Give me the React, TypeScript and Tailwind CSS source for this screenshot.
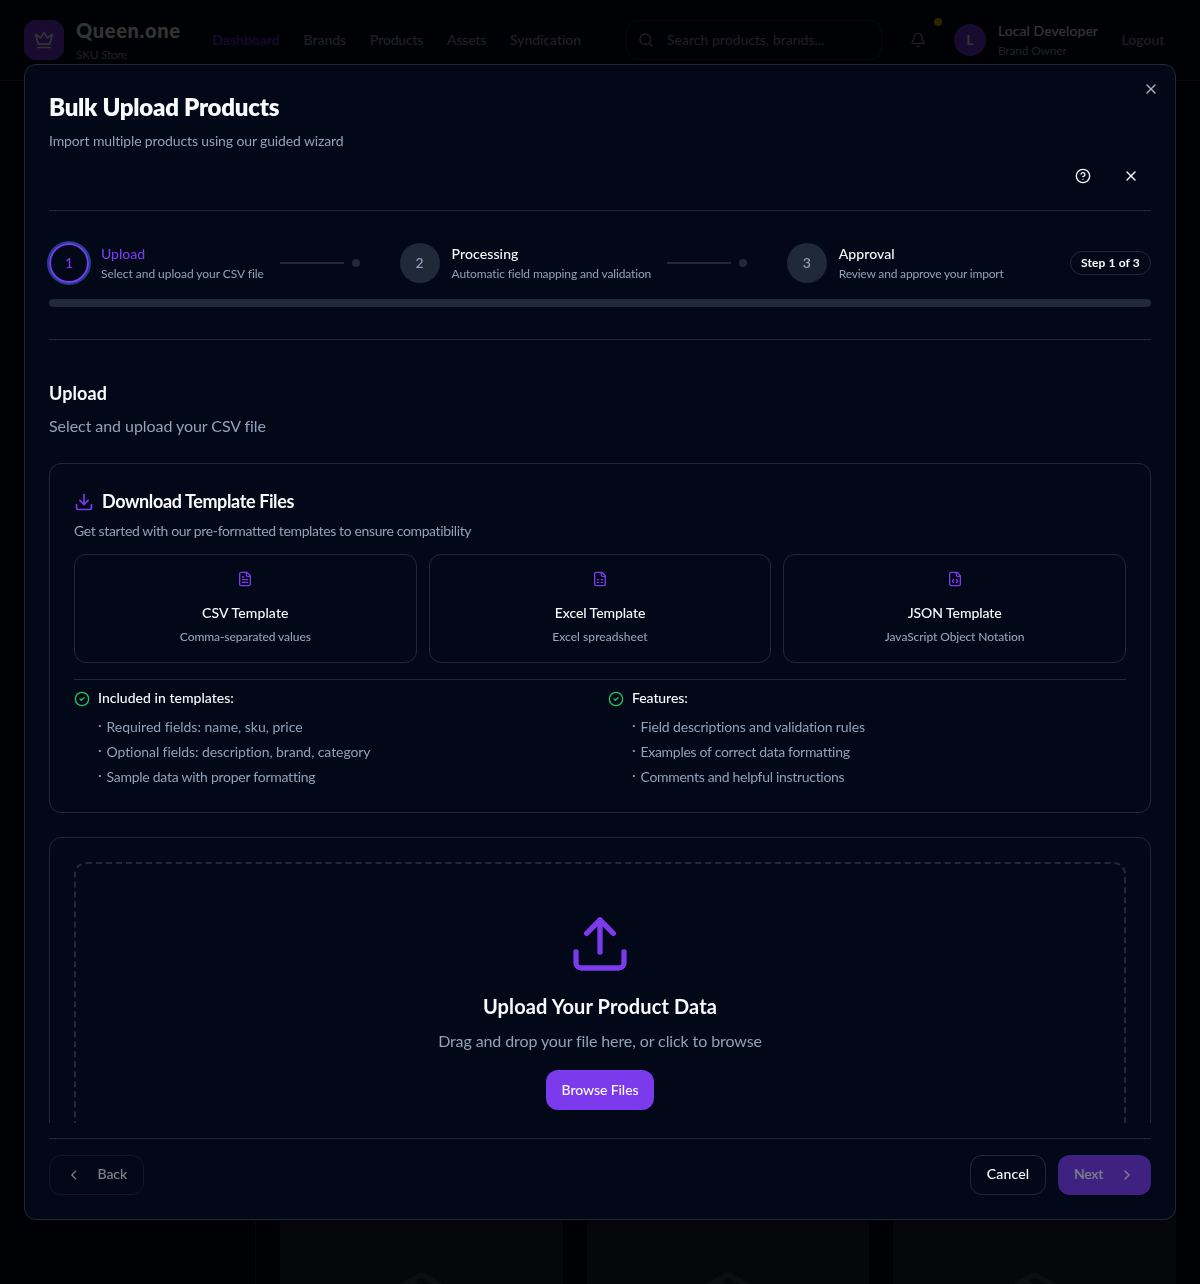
import type { ReactNode } from "react";
import { Bell, ChevronLeft, ChevronRight, CircleCheck, CircleQuestionMark, Crown, Download, Package, Search, Upload, X } from "lucide-react";

function FileIcon({ children }: { children: ReactNode }) {
  return (
    <svg viewBox="0 0 24 24" fill="none" stroke="currentColor" strokeWidth="2" strokeLinecap="round" strokeLinejoin="round" className="size-4 text-[#7c3aed]">
      <path d="M15 2H6a2 2 0 0 0-2 2v16a2 2 0 0 0 2 2h12a2 2 0 0 0 2-2V7Z" />
      <path d="M14 2v4a2 2 0 0 0 2 2h4" />
      {children}
    </svg>
  );
}

const navItems = [
  { label: "Dashboard", style: "w-[67px] text-[#7c3aed] tracking-[0.02px]" },
  { label: "Brands", style: "w-[42.6px] text-slate-400 tracking-[-0.02px]" },
  { label: "Products", style: "w-[53px] text-slate-400 tracking-[-0.21px]" },
  { label: "Assets", style: "w-[39px] text-slate-400 tracking-[-0.2px]" },
  { label: "Syndication", style: "w-[71px] text-slate-400 tracking-[-0.06px]" },
];

function Header() {
  return (
    <header className="flex h-[81px] items-start border-b border-[#1f2937] px-6 pt-5">
      <div className="flex size-10 items-center justify-center rounded-xl bg-[#7c3aed]">
        <Crown className="size-5 text-white" />
      </div>
      <div className="ml-3 w-[136.5px]">
        <div className="-mt-1 h-7 text-xl leading-7 font-black tracking-[0.68px] text-white">Queen.one</div>
        <div className="mt-[3px] text-xs leading-4 tracking-[-0.34px] text-slate-400">SKU Store</div>
      </div>
      <nav className="flex h-10 items-center gap-6 text-sm font-medium whitespace-nowrap">
        {navItems.map((n) => (
          <a key={n.label} className={n.style}>{n.label}</a>
        ))}
      </nav>
      <div className="ml-auto flex h-10 w-64 items-center rounded-xl border border-[#1f2937] px-[11px]">
        <Search className="size-4 text-slate-400" />
        <span className="ml-[13px] text-sm tracking-[0.02px] text-slate-400">Search products, brands...</span>
      </div>
      <div className="relative ml-4 flex size-10 items-center justify-center">
        <Bell className="size-4 text-slate-400" />
        <span className="absolute -top-0.5 -right-1 size-2 rounded-full bg-yellow-500" />
      </div>
      <div className="mt-1 ml-4 flex size-8 items-center justify-center rounded-full bg-[#7c3aed] text-sm font-bold text-white">L</div>
      <div className="ml-3 w-[123.5px] pt-px whitespace-nowrap">
        <div className="text-sm leading-5 font-medium tracking-[0.05px] text-white">Local Developer</div>
        <div className="mt-[2px] text-xs leading-4 tracking-[-0.2px] text-slate-400">Brand Owner</div>
      </div>
      <span className="w-[54.5px] text-sm leading-10 font-medium tracking-[0.04px] text-slate-400">Logout</span>
    </header>
  );
}

function PageBehind() {
  return (
    <div className="flex h-[1284px] flex-col">
      <Header />
      <div className="flex flex-1">
        <aside className="w-64 border-r border-[#1f2937]" />
        <main className="grid flex-1 grid-cols-3 items-end gap-6 px-6">
          {[0, 1, 2].map((i) => (
            <div key={i} className="flex h-[260px] justify-center overflow-hidden bg-[#1f242b]">
              <Package className="mt-[246px] size-16 shrink-0 text-[#41464f]" />
            </div>
          ))}
        </main>
      </div>
    </div>
  );
}

function Connector() {
  return (
    <div className="mr-[39.6px] ml-4 flex items-center gap-2">
      <div className="h-0.5 w-16 bg-[#1f2937]" />
      <div className="size-2 rounded-full bg-[#1f2937]" />
    </div>
  );
}

function Step({ n, title, text, active = false, textStyle, titleStyle }: { n: number; title: string; text: string; active?: boolean; textStyle: string; titleStyle: string }) {
  return (
    <div className="flex items-center gap-3">
      <div
        className={
          active
            ? "flex size-10 items-center justify-center rounded-full border-2 border-[#7c3aed] text-sm font-medium text-[#7c3aed] ring-2 ring-blue-500/50"
            : "flex size-10 items-center justify-center rounded-full bg-[#1f2937] text-sm font-medium text-slate-400"
        }
      >
        {n}
      </div>
      <div className="whitespace-nowrap">
        <div className={`text-sm leading-5 font-medium ${titleStyle}`}>{title}</div>
        <div className={`mt-0.5 text-xs leading-4 text-slate-400 ${textStyle}`}>{text}</div>
      </div>
    </div>
  );
}

const templates = [
  {
    title: "CSV Template", titleStyle: "tracking-[0.12px]", text: "Comma-separated values", textStyle: "tracking-[-0.09px]",
    icon: <><path d="M10 9H8" /><path d="M16 13H8" /><path d="M16 17H8" /></>,
  },
  {
    title: "Excel Template", titleStyle: "tracking-[-0.06px]", text: "Excel spreadsheet", textStyle: "tracking-[0.04px]",
    icon: <><path d="M8 13h2" /><path d="M14 13h2" /><path d="M8 17h2" /><path d="M14 17h2" /></>,
  },
  {
    title: "JSON Template", titleStyle: "tracking-[-0.06px]", text: "JavaScript Object Notation", textStyle: "tracking-[-0.08px]",
    icon: <><path d="M10 12.5 8 15l2 2.5" /><path d="m14 12.5 2 2.5-2 2.5" /></>,
  },
];

const lists = [
  {
    title: "Included in templates:", titleStyle: "tracking-[0.03px]",
    items: [
      { text: "Required fields: name, sku, price", style: "tracking-[-0.02px]" },
      { text: "Optional fields: description, brand, category", style: "tracking-[-0.075px]" },
      { text: "Sample data with proper formatting", style: "tracking-[-0.26px]" },
    ],
  },
  {
    title: "Features:", titleStyle: "tracking-[-0.08px]",
    items: [
      { text: "Field descriptions and validation rules", style: "tracking-[-0.145px]" },
      { text: "Examples of correct data formatting", style: "tracking-[-0.3px]" },
      { text: "Comments and helpful instructions", style: "tracking-[-0.31px]" },
    ],
  },
];

function TemplatesCard() {
  return (
    <section className="h-[350px] rounded-xl border border-[#1f2937] p-6">
      <div className="flex items-center gap-2">
        <Download className="mt-[3px] size-5 text-[#7c3aed]" />
        <h3 className="relative top-px text-lg leading-6 font-bold tracking-[-0.38px]">Download Template Files</h3>
      </div>
      <p className="mt-[9px] text-sm leading-5 tracking-[-0.37px] text-slate-400">Get started with our pre-formatted templates to ensure compatibility</p>
      <div className="mt-[13px] grid grid-cols-3 gap-3">
        {templates.map((t) => (
          <div key={t.title} className="flex h-[109px] flex-col items-center rounded-xl border border-[#1f2937] pt-4">
            <FileIcon>{t.icon}</FileIcon>
            <div className={`mt-4 text-sm leading-5 font-medium ${t.titleStyle}`}>{t.title}</div>
            <div className={`mt-1.5 text-xs leading-4 font-medium text-slate-400 ${t.textStyle}`}>{t.text}</div>
          </div>
        ))}
      </div>
      <div className="mt-4 grid grid-cols-2 gap-4 border-t border-[#1f2937] pt-2">
        {lists.map((l) => (
          <div key={l.title} className="flex gap-2">
            <CircleCheck className="mt-[3px] size-4 text-[#22c55e]" />
            <div>
              <div className={`text-sm leading-5 font-medium ${l.titleStyle}`}>{l.title}</div>
              <ul className="mt-[9px] flex flex-col gap-[5px] text-sm leading-5 text-slate-400">
                {l.items.map((i) => (
                  <li key={i.text} className="flex">
                    <span className="-mt-0.5 w-[8.5px]">·</span>
                    <span className={i.style}>{i.text}</span>
                  </li>
                ))}
              </ul>
            </div>
          </div>
        ))}
      </div>
    </section>
  );
}

function DropCard() {
  return (
    <section className="mt-6 rounded-xl border border-[#1f2937] p-6">
      <div className="flex h-[380px] flex-col items-center rounded-xl border-2 border-dashed border-[#1f2937] pt-12">
        <Upload className="size-16 text-[#7c3aed]" />
        <h3 className="mt-4 text-xl leading-7 font-bold tracking-[0.12px]">Upload Your Product Data</h3>
        <p className="mt-[9px] text-base leading-6 tracking-[-0.1px] text-slate-400">Drag and drop your file here, or click to browse</p>
        <button className="mt-[17px] h-10 w-[108px] rounded-xl bg-[#7c3aed] text-sm font-medium tracking-[-0.07px]">Browse Files</button>
      </div>
    </section>
  );
}

function Dialog() {
  return (
    <div className="relative flex h-[1155.6px] w-[1152px] flex-col rounded-xl border border-[#1e293b] bg-[#020817] p-6 text-slate-50 shadow-lg">
      <X className="absolute top-4 right-4 size-4 opacity-70" />
      <h1 className="mt-[1.5px] text-2xl leading-8 font-extrabold tracking-[-0.25px]">Bulk Upload Products</h1>
      <p className="mt-[8.5px] text-sm leading-5 tracking-[-0.13px] text-slate-400">Import multiple products using our guided wizard</p>
      <div className="mt-[7px] flex justify-end gap-2 border-b border-[#1f2937] pb-4">
        <button className="flex h-9 w-10 items-center justify-center"><CircleQuestionMark className="size-4" /></button>
        <button className="flex h-9 w-10 items-center justify-center"><X className="size-4" /></button>
      </div>
      <div className="border-b border-[#1f2937] py-8">
        <div className="flex h-10 items-center">
          <Step n={1} active title="Upload" titleStyle="text-[#7c3aed] tracking-[-0.02px]" text="Select and upload your CSV file" textStyle="w-[163px] tracking-[-0.04px]" />
          <Connector />
          <Step n={2} title="Processing" titleStyle="tracking-[0.1px]" text="Automatic field mapping and validation" textStyle="w-[199.5px] tracking-[-0.14px]" />
          <Connector />
          <Step n={3} title="Approval" titleStyle="tracking-[0.08px]" text="Review and approve your import" textStyle="tracking-[-0.18px]" />
          <span className="ml-auto flex h-6 w-[81px] items-center justify-center rounded-full border border-[#1f2937] pb-px text-xs font-bold tracking-[0.13px]">Step 1 of 3</span>
        </div>
        <div className="mt-4 h-2 rounded-full bg-[#1f2937]" />
      </div>
      <div className="min-h-0 flex-1 overflow-hidden pt-[39px]">
        <h2 className="text-lg leading-7 font-bold tracking-[0.08px]">Upload</h2>
        <p className="mt-[7px] mb-[25px] text-base leading-6 tracking-[-0.06px] text-slate-400">Select and upload your CSV file</p>
        <TemplatesCard />
        <DropCard />
      </div>
      <footer className="mt-[15px] flex border-t border-[#1f2937] pt-4 text-sm font-medium">
        <button className="flex h-10 w-[95px] items-center gap-4 rounded-xl border border-[#1f2937] px-4 tracking-[-0.1px] opacity-50">
          <ChevronLeft className="size-4" /><span className="pb-0.5">Back</span>
        </button>
        <button className="ml-auto h-10 w-[76px] rounded-xl border border-[#1f2937] pb-0.5 tracking-[0.16px]">Cancel</button>
        <button className="ml-3 flex h-10 w-[93px] items-center justify-between rounded-xl bg-[#7c3aed] px-4 tracking-[-0.23px] opacity-50">
          <span className="pb-0.5">Next</span><ChevronRight className="size-4" />
        </button>
      </footer>
    </div>
  );
}

export default function App() {
  return (
    <div className="h-[1284px] overflow-hidden bg-[#020817] font-[Lato,sans-serif]">
      <PageBehind />
      <div className="fixed inset-0 flex items-center justify-center bg-black/80">
        <Dialog />
      </div>
    </div>
  );
}
